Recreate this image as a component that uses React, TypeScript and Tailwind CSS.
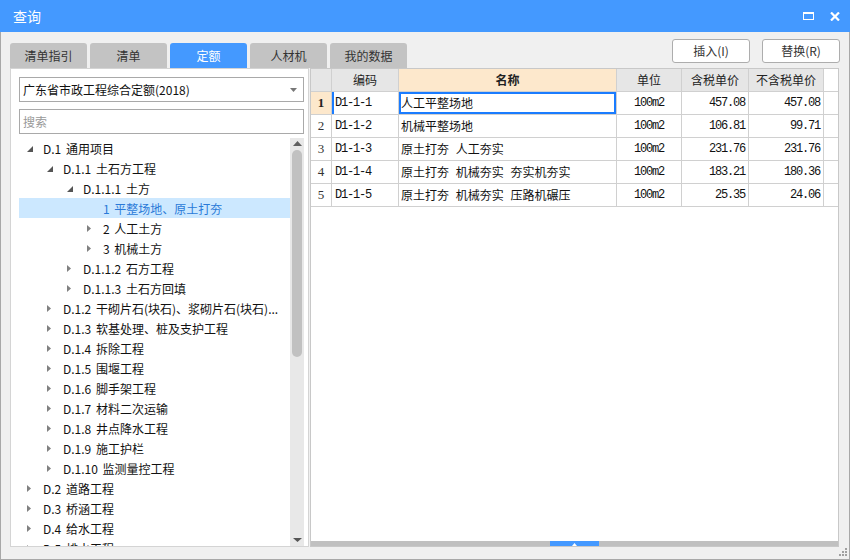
import React from 'react';

type TreeNode = {
  label: string;
  level: 0 | 1 | 2 | 3;
  state: 'open' | 'closed' | 'leaf';
  selected?: boolean;
};

const tree: TreeNode[] = [
  { label: 'D.1 通用项目', level: 0, state: 'open' },
  { label: 'D.1.1 土石方工程', level: 1, state: 'open' },
  { label: 'D.1.1.1 土方', level: 2, state: 'open' },
  { label: '1 平整场地、原土打夯', level: 3, state: 'leaf', selected: true },
  { label: '2 人工土方', level: 3, state: 'closed' },
  { label: '3 机械土方', level: 3, state: 'closed' },
  { label: 'D.1.1.2 石方工程', level: 2, state: 'closed' },
  { label: 'D.1.1.3 土石方回填', level: 2, state: 'closed' },
  { label: 'D.1.2 干砌片石(块石)、浆砌片石(块石)...', level: 1, state: 'closed' },
  { label: 'D.1.3 软基处理、桩及支护工程', level: 1, state: 'closed' },
  { label: 'D.1.4 拆除工程', level: 1, state: 'closed' },
  { label: 'D.1.5 围堰工程', level: 1, state: 'closed' },
  { label: 'D.1.6 脚手架工程', level: 1, state: 'closed' },
  { label: 'D.1.7 材料二次运输', level: 1, state: 'closed' },
  { label: 'D.1.8 井点降水工程', level: 1, state: 'closed' },
  { label: 'D.1.9 施工护栏', level: 1, state: 'closed' },
  { label: 'D.1.10 监测量控工程', level: 1, state: 'closed' },
  { label: 'D.2 道路工程', level: 0, state: 'closed' },
  { label: 'D.3 桥涵工程', level: 0, state: 'closed' },
  { label: 'D.4 给水工程', level: 0, state: 'closed' },
  { label: 'D.5 排水工程', level: 0, state: 'closed' },
];

const indent = ['pl-[4px]', 'pl-[24px]', 'pl-[44px]', 'pl-[64px]'];

const rows = [
  ['D1-1-1', '人工平整场地', '100m2', '457.08', '457.08'],
  ['D1-1-2', '机械平整场地', '100m2', '106.81', '99.71'],
  ['D1-1-3', '原土打夯 人工夯实', '100m2', '231.76', '231.76'],
  ['D1-1-4', '原土打夯 机械夯实 夯实机夯实', '100m2', '183.21', '180.36'],
  ['D1-1-5', '原土打夯 机械夯实 压路机碾压', '100m2', '25.35', '24.06'],
];

const tabs = ['清单指引', '清单', '定额', '人材机', '我的数据'];

const cols = 'grid grid-cols-[21px_67px_218px_65px_67px_75px]';
const mono = "[font-family:'Liberation_Mono',monospace] text-[12px] tracking-[-1.2px] text-[#111]";

const Toggle: React.FC<{ state: TreeNode['state'] }> = ({ state }) => {
  if (state === 'open') {
    return (
      <svg width="6" height="6" viewBox="0 0 6 6">
        <path d="M6 0 L6 6 L0 6 Z" fill="#555" />
      </svg>
    );
  }
  if (state === 'closed') {
    return (
      <svg width="4" height="7" viewBox="0 0 4 7">
        <path d="M0 0 L4 3.5 L0 7 Z" fill="#808080" />
      </svg>
    );
  }
  return null;
};

export default function App() {
  return (
    <div className="w-[850px] h-[560px] flex flex-col bg-[#f0f0f0] [font-family:'Noto_Sans_CJK_SC','Noto_Sans',sans-serif] text-[12px] text-[#222] overflow-hidden">
      {/* title bar */}
      <div className="h-[32px] shrink-0 bg-[#4499ff] flex items-center justify-between pl-[13px] pr-[10px]">
        <span className="text-white text-[14px]">查询</span>
        <div className="flex items-center gap-[16px]">
          <svg width="11" height="8" viewBox="0 0 11 8">
            <rect x="0.5" y="1" width="10" height="6.5" fill="none" stroke="#fff" strokeWidth="1" />
            <rect x="0" y="0" width="11" height="2" fill="#fff" />
          </svg>
          <svg width="10" height="9" viewBox="0 0 10 9">
            <path d="M1 0.5 L9 8.5 M9 0.5 L1 8.5" stroke="#fff" strokeWidth="2.2" />
          </svg>
        </div>
      </div>

      <div className="flex-1 flex flex-col border-x border-b border-[#a8a8a8] px-[9px] relative">
        {/* tabs and buttons */}
        <div className="h-[36px] shrink-0 flex items-start justify-between">
          <div className="flex gap-[3px] mt-[11px]">
            {tabs.map((t) => (
              <div
                key={t}
                className={`w-[77px] h-[25px] rounded-t-[3px] flex items-center justify-center ${
                  t === '定额' ? 'bg-[#4499ff] text-white' : 'bg-[#c3c3c3] text-[#333]'
                }`}
              >
                {t}
              </div>
            ))}
          </div>
          <div className="flex gap-[12px] mt-[7px]">
            <button className="w-[78px] h-[24px] bg-white border border-[#adadad] rounded-[3px] text-[#333]">
              插入(I)
            </button>
            <button className="w-[78px] h-[24px] bg-white border border-[#adadad] rounded-[3px] text-[#333]">
              替换(R)
            </button>
          </div>
        </div>

        {/* main area */}
        <div className="h-[479px] shrink-0 flex gap-[1px]">
          {/* left panel */}
          <div className="w-[299px] bg-white border border-[#d4d4d4] flex flex-col pl-[8px] pr-[4px] pt-[8px]">
            <div className="h-[25px] border border-[#a9a9a9] flex items-center justify-between pl-[3px] pr-[6px]">
              <span className="text-[#111]">广东省市政工程综合定额(2018)</span>
              <svg width="7" height="4" viewBox="0 0 7 4">
                <path d="M0 0 L7 0 L3.5 4 Z" fill="#777" />
              </svg>
            </div>
            <div className="h-[25px] mt-[7px] border border-[#a9a9a9] flex items-center pl-[3px] text-[#999]">
              搜索
            </div>
            <div className="flex-1 mt-[4px] flex min-h-0">
              <div className="flex-1 overflow-hidden">
                {tree.map((n) => (
                  <div
                    key={n.label}
                    className={`h-[20px] flex items-center whitespace-nowrap ${indent[n.level]} ${
                      n.selected ? 'bg-[#cce8ff] text-[#2a7ad8]' : 'text-[#111]'
                    }`}
                  >
                    <span className="w-[20px] shrink-0 flex items-center pl-[4px] pt-[1px]">
                      <Toggle state={n.state} />
                    </span>
                    <span className="overflow-hidden pt-[2px] [word-spacing:2px]">{n.label}</span>
                  </div>
                ))}
              </div>
              <div className="w-[14px] bg-[#e8e8e8] flex flex-col items-center">
                <svg className="mt-[3px]" width="9" height="5" viewBox="0 0 9 5">
                  <path d="M0 5 L4.5 0 L9 5 Z" fill="#606060" />
                </svg>
                <div className="w-[10px] h-[207px] mt-[4px] rounded-full bg-[#c1c1c1]" />
                <div className="flex-1" />
                <svg className="mb-[4px]" width="9" height="4" viewBox="0 0 9 4">
                  <path d="M0 0 L9 0 L4.5 4 Z" fill="#555" />
                </svg>
              </div>
            </div>
          </div>

          {/* right grid */}
          <div className="w-[529px] bg-white border border-[#c8c8c8] flex flex-col">
            <div className={`${cols} h-[23px] border-b border-[#d0d0d0]`}>
              <div className="bg-[#e6e6e6] border-r border-[#d0d0d0]" />
              <div className="bg-[#e6e6e6] border-r border-[#d0d0d0] flex items-center justify-center">编码</div>
              <div className="bg-[#fde8cc] border-r border-[#d0d0d0] flex items-center justify-center font-bold">名称</div>
              <div className="bg-[#e6e6e6] border-r border-[#d0d0d0] flex items-center justify-center">单位</div>
              <div className="bg-[#e6e6e6] border-r border-[#d0d0d0] flex items-center justify-center">含税单价</div>
              <div className="bg-[#e6e6e6] border-r border-[#d0d0d0] flex items-center justify-center">不含税单价</div>
            </div>
            {rows.map((r, i) => (
              <div key={r[0]} className={`${cols} h-[23px] border-b border-[#d0d0d0]`}>
                <div
                  className={`border-r border-[#d0d0d0] flex items-center justify-center [font-family:'Liberation_Serif',serif] text-[13px] ${
                    i === 0 ? 'bg-[#fde8cc] font-bold text-[#222]' : 'text-[#333]'
                  }`}
                >
                  {i + 1}
                </div>
                <div
                  className={`border-r border-[#d0d0d0] flex items-center pl-[3px] ${mono} ${
                    i === 0 ? 'shadow-[inset_2px_0_0_#1a7cff]' : ''
                  }`}
                >
                  {r[0]}
                </div>
                <div
                  className={`border-r border-[#d0d0d0] flex items-center pl-[2px] text-[#111] whitespace-pre [word-spacing:4px] ${
                    i === 0 ? 'shadow-[inset_0_0_0_2px_#1a7cff]' : ''
                  }`}
                >
                  {r[1]}
                </div>
                <div className={`border-r border-[#d0d0d0] flex items-center justify-center ${mono}`}>{r[2]}</div>
                <div className={`border-r border-[#d0d0d0] flex items-center justify-end pr-[3px] ${mono}`}>{r[3]}</div>
                <div className={`border-r border-[#d0d0d0] flex items-center justify-end pr-[3px] ${mono}`}>{r[4]}</div>
              </div>
            ))}
            <div className="flex-1" />
            <div className="h-[5px] bg-[#c0c0c0] flex">
              <div className="ml-[239px] w-[49px] bg-[#4499ff] flex items-end justify-center">
                <svg width="5" height="3" viewBox="0 0 5 3">
                  <path d="M0 3 L2.5 0 L5 3 Z" fill="#fff" />
                </svg>
              </div>
            </div>
          </div>
        </div>

        {/* resize grip */}
        <svg className="absolute right-[1px] bottom-[2px]" width="9" height="9" viewBox="0 0 9 9">
          <rect x="6" y="0" width="2" height="2" fill="#a0a0a0" />
          <rect x="3" y="3" width="2" height="2" fill="#a0a0a0" />
          <rect x="6" y="3" width="2" height="2" fill="#a0a0a0" />
          <rect x="0" y="6" width="2" height="2" fill="#a0a0a0" />
          <rect x="3" y="6" width="2" height="2" fill="#a0a0a0" />
          <rect x="6" y="6" width="2" height="2" fill="#a0a0a0" />
        </svg>
      </div>
    </div>
  );
}
